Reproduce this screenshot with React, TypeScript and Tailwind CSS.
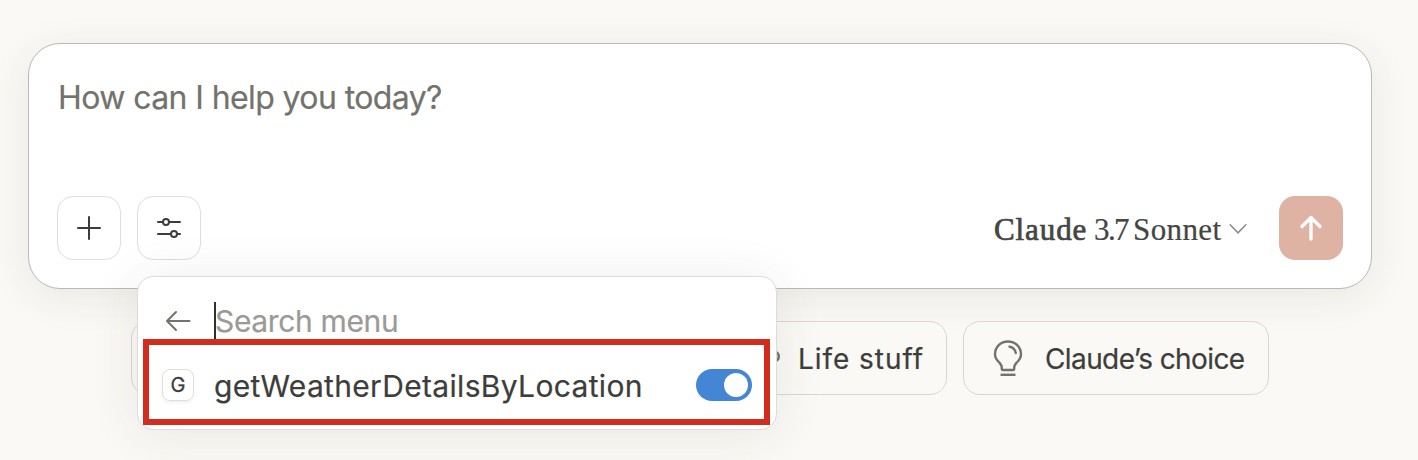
import type { ReactNode } from "react";

function IconButton({ label, children }: { label: string; children: ReactNode }) {
  return (
    <button aria-label={label} className="flex size-16 items-center justify-center rounded-2xl border border-[#dededc]">
      {children}
    </button>
  );
}

function Chip({ className, icon, label }: { className: string; icon?: ReactNode; label?: ReactNode }) {
  return (
    <button className={`flex h-[74px] shrink-0 items-center rounded-[17px] border border-[#d8d7d3] bg-[#faf9f5]/50 pl-7 text-[#3d3d3a] ${className}`}>
      {icon}
      {label}
    </button>
  );
}

function Composer() {
  return (
    <section className="flex h-[246px] w-[1344px] flex-col justify-between rounded-[32px] border border-[#b9b9b9] bg-white p-7 shadow-[0_8px_40px_rgba(60,60,40,0.09)]">
      <p className="mt-[1px] ml-[1px] text-[32px] leading-[50px] tracking-[-0.6px] whitespace-nowrap text-[#73726c] [-webkit-text-stroke:0.2px_#73726c]">
        How can I help you today?
      </p>
      <div className="flex items-center">
        <div className="flex gap-4">
          <IconButton label="Add">
            <svg width="24" height="24" viewBox="0 0 24 24" stroke="#3d3d3a" strokeWidth="2" strokeLinecap="round">
              <path d="M12 1v22M1 12h22" />
            </svg>
          </IconButton>
          <IconButton label="Tools">
            <svg width="24" height="20" viewBox="0 0 24 20" fill="none" stroke="#3d3d3a" strokeWidth="2" strokeLinecap="round">
              <path d="M1 4h4.8M12 4h11M1 16h12.8M20 16h3" />
              <circle cx="9" cy="4" r="3" />
              <circle cx="17" cy="16" r="3" />
            </svg>
          </IconButton>
        </div>
        <div className="ml-auto flex items-center pt-0.5 font-['Liberation_Serif',serif] text-[31px] leading-none whitespace-nowrap text-[#454543]">
          <span className="w-[100px] tracking-[0.9px] [-webkit-text-stroke:0.7px_#454543]">Claude</span>
          <span className="w-[39px] tracking-[-1.600px] [-webkit-text-stroke:0.2px_#454543]">3.7</span>
          <span className="w-[88px] tracking-[0.4px] [-webkit-text-stroke:0.2px_#454543]">Sonnet</span>
        </div>
        <svg className="mt-px mr-8 ml-2" width="18" height="12" viewBox="0 0 18 12" fill="none" stroke="#8b8a86" strokeWidth="1.5" strokeLinecap="round">
          <path d="M1.2 1.700 9 9.800l7.800-8.100" />
        </svg>
        <button aria-label="Send" className="flex size-16 items-center justify-center rounded-2xl bg-[#deb3a4]">
          <svg width="24" height="26" viewBox="0 0 24 26" fill="none" stroke="white" strokeWidth="3.300" strokeLinecap="round" strokeLinejoin="round">
            <path d="M12 24V2.500M3 11.500l9-9 9 9" />
          </svg>
        </button>
      </div>
    </section>
  );
}

function Suggestions() {
  return (
    <div className="mt-8 ml-[103px] flex gap-4">
      <Chip className="w-[569px]" />
      <Chip
        className="w-[231px]"
        icon={
          <svg className="mr-[17px] shrink-0" width="36" height="36" viewBox="0 0 36 36" fill="none" stroke="#73726c" strokeWidth="2.500" strokeLinecap="round">
            <path d="M4 11h24v10c0 6-4 10-9 10h-6c-5 0-9-4-9-10zM28 12h2c5 0 5 9 0 9h-2M12 3v4M20 3v4" />
          </svg>
        }
        label={<span className="mt-[2px] text-[28px] tracking-[0.95px] whitespace-nowrap [-webkit-text-stroke:0.2px_#3d3d3a]">Life stuff</span>}
      />
      <Chip
        className="w-[306px]"
        icon={
          <svg className="mr-[21px] shrink-0" width="32" height="38" viewBox="0 0 32 38" fill="none" stroke="#73726c" strokeWidth="2.400" strokeLinecap="round" strokeLinejoin="round">
            <path d="M9.800 30v-1.200c0-2-.9-3.500-2.200-4.900C4.700 21.300 3 18.800 3 15.300 3 7.900 8.700 2.500 16 2.500s13 5.400 13 12.800c0 3.500-1.700 6-4.600 8.600-1.300 1.400-2.200 2.900-2.200 4.900V30c0 .6-.5 1-1 1H10.800c-.6 0-1-.4-1-1Z" />
            <path d="M17.500 7.600c3.300.6 5.500 2.700 6.300 6.400" />
            <path strokeLinecap="butt" d="M8.500 35.800h15" />
          </svg>
        }
        label={<span className="mt-[2px] text-[28px] tracking-[-0.6px] whitespace-nowrap [-webkit-text-stroke:0.2px_#3d3d3a]">Claude’s choice</span>}
      />
    </div>
  );
}

function ToolMenu() {
  return (
    <div className="absolute top-[276px] left-[137px] h-[154px] w-[640px] rounded-2xl border border-[#dcdcda] bg-white px-[5px] pt-[25px] shadow-[0_4px_50px_rgba(60,60,40,0.09)]">
      <div className="flex h-[37px] items-center pl-[22px]">
        <svg className="shrink-0" width="26" height="22" viewBox="0 0 26 22" fill="none" stroke="#73726c" strokeWidth="2" strokeLinecap="round" strokeLinejoin="round">
          <path d="M24.500 11H2M11 2l-9 9 9 9" />
        </svg>
        <div className="ml-[23px] flex h-[37px] items-center border-l-2 border-[#30302e] text-[30px] tracking-[-0.35px] whitespace-nowrap text-[#9b9a96] [-webkit-text-stroke:0.2px_#9b9a96]">
          <span className="mt-[1px] -ml-px">Search menu</span>
        </div>
      </div>
      <div className="flex h-[86px] w-[627px] items-center border-6 border-[#d22c1e] pt-1.5 pr-3 pl-[13px]">
        <span className="flex size-8 shrink-0 items-center justify-center rounded-lg border border-[#dededc] text-[20px] text-[#3d3d3a] shadow-[0_2px_3px_rgba(0,0,0,0.05)] [-webkit-text-stroke:0.3px_#3d3d3a]">
          G
        </span>
        <span className="mt-[2px] ml-5 text-[30px] leading-none tracking-[0.33px] whitespace-nowrap text-[#3d3d3a] [-webkit-text-stroke:0.2px_#3d3d3a]">getWeatherDetailsByLocation</span>
        <span className="ml-auto flex h-8 w-14 shrink-0 items-center justify-end rounded-full bg-[#4485d6] pr-1">
          <span className="size-6 rounded-full bg-white" />
        </span>
      </div>
    </div>
  );
}

export default function App() {
  return (
    <main className="relative h-[460px] w-[1418px] overflow-hidden bg-[#faf9f5] pt-[43px] pl-7 font-['Inter',sans-serif]">
      <Composer />
      <Suggestions />
      <ToolMenu />
    </main>
  );
}
